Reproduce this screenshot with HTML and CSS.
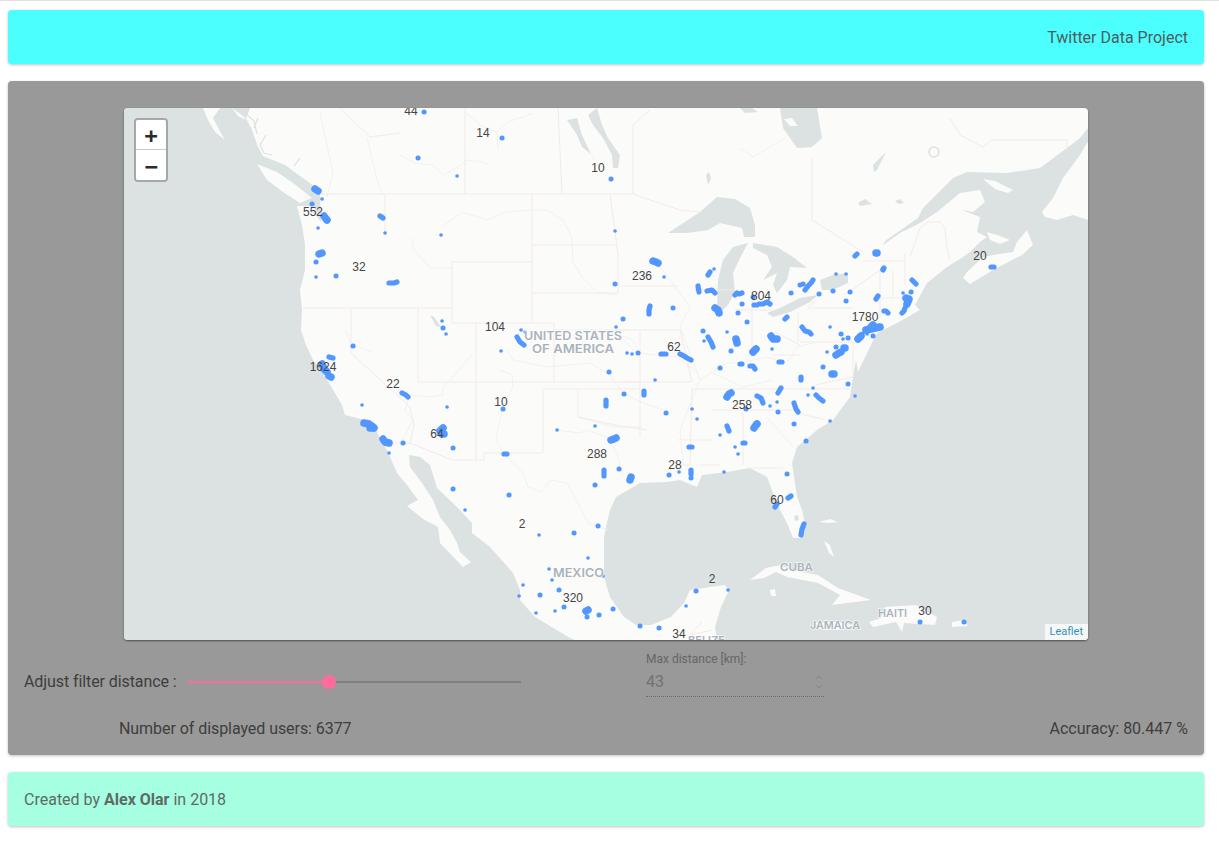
FILE: index.html
```html
<!DOCTYPE html>
<html lang="en">
<head>
<meta charset="utf-8">
<title>Twitter Data Project</title>
<link rel="stylesheet" href="styles.css">
</head>
<body>
<div class="page">
  <header class="card header">Twitter Data Project</header>
  <main class="card panel">
    <div class="map">
      <svg class="map-svg" viewBox="124 108 964 532" width="964" height="532">
        <rect class="land" x="124" y="108" width="964" height="532"/>
        <!-- oceans -->
        <path class="water" d="M124 108L250 108L246 118L252 130L258 147L263 156L285 165L300 176L314 186L320 195L321 222L316 215L314 206L297 206L302 225L305 245L305 270L300 290L302 310L301 330L306 345L313 360L322 372L332 388L342 405L345 415L365 420L375 428L381 441L387 450L397 473L407 485L418 500L407 506L423 519L438 527L440 543L463 567L471 562L460 552L457 543L450 530L440 517L433 500L422 483L410 467L409 455L420 457L430 465L437 488L457 507L472 523L472 533L490 547L513 573L520 590L520 600L535 617L570 638L575 640L124 640Z"/>
        <path class="water" d="M717 640L715 627L721 607L729 590L725 585L710 587L690 590L684 603L671 617L651 625L636 625L624 617L610 597L604 577L604 560L604 538L606 527L610 510L616 497L640 483L667 482L680 480L697 487L702 475L727 472L750 468L767 477L773 493L780 510L787 523L793 538L801 538L805 523L802 510L797 497L792 463L797 447L817 430L833 420L850 397L853 377L856 360L858 372L867 353L877 333L897 323L920 310L915 305L927 283L947 267L963 257L970 252L980 242L987 237L977 232L980 217L962 210L973 212L985 202L980 190L960 193L937 212L920 223L900 233L883 245L885 241L918 218L923 208L953 178L967 172L1007 173L1040 168L1067 148L1080 138L1088 128L1088 640Z"/>
        <!-- islands -->
        <path class="land" d="M203 108L220 108L213 118L222 135L225 140L215 132L208 120Z"/>
        <path class="land" d="M232 108L243 116L246 120L238 116Z"/>
        <path class="land" d="M257 164L277 172L293 183L312 198L300 203L283 192L267 180Z"/>
        <path class="land" d="M963 278L967 272L983 257L993 255L1013 252L1017 242L1027 230L1033 245L1022 255L993 270L970 284Z"/>
        <path class="land" d="M987 232L1000 236L1010 240L1000 244L990 240Z"/>
        <path class="land" d="M1042 212L1053 198L1063 178L1080 155L1087 143L1088 143L1088 220L1073 215L1057 220L1045 217Z"/>
        <path class="land" d="M983 179L995 181L1013 190L1008 193L995 189Z"/>
        <path class="land" d="M750 580L766 568L780 565L791 570L818 575L838 588L871 600L832 605L840 595L818 583L787 577L776 572L764 578Z"/>
        <path class="land" d="M869 622L881 618L885 607L916 605L937 617L935 625L904 623L902 632L896 622L873 627Z"/>
        <path class="land" d="M952 622L964 620L968 626L952 627Z"/>
        <path class="land" d="M824 541L830 545L834 557L829 553Z"/>
        <path class="land" d="M814 623L838 622L856 626L838 630L820 629Z"/>
        <path class="land" d="M770 590L775 589L776 596L771 596Z"/>
        <path class="land" d="M819 522L830 519L838 522L828 523Z"/>
        <path class="inlet" d="M245 113l9 8 3 13M258 118l-4 10M266 135l-6 10 4 8 8 2M300 158l-6 8"/>
        <!-- lakes -->
        <path class="water" d="M668 233L700 212L717 197L735 199L750 208L755 225L755 237L744 237L742 228L720 223L708 230L687 233Z"/>
        <path class="water" d="M717 310L718 280L723 260L733 247L748 243L740 258L733 273L735 292L728 305L720 313Z"/>
        <path class="water" d="M753 243L777 247L793 257L807 268L790 267L787 280L777 293L773 285L777 273L763 280L772 267L767 255L753 248Z"/>
        <path class="water" d="M767 313L780 308L800 298L818 295L810 302L790 312L773 317Z"/>
        <path class="water" d="M820 280L833 275L848 273L848 283L833 290L822 290Z"/>
        <path class="water" d="M588 115L597 108L602 125L608 138L620 155L618 168L613 168L612 155L603 138L593 125Z"/>
        <path class="water" d="M567 120L577 118L582 135L590 152L595 162L592 155L582 147L577 135Z"/>
        <path class="water" d="M780 108L817 108L822 138L812 147L797 148L783 128Z"/>
        <path class="land" d="M784 119L792 118L798 126L790 126Z"/>
        <path class="water" d="M740 108L752 108L758 112L745 113Z"/>
        <path class="water" d="M706 175L709 172L711 178L708 185Z"/>
        <path class="water" d="M430 315L434 317L441 327L436 326Z"/>
        <path class="water" d="M858 203L865 199L872 204L860 206Z"/>
        <path class="water" d="M873 165L886 152L877 170L874 172Z"/>
        <path class="water" d="M895 201L900 199L904 203L899 204Z"/>
        <path class="water" d="M794 516L798 515L799 520L795 521Z"/>
        <circle class="ring" cx="934" cy="152" r="5"/>
        <!-- rivers -->
        <path class="river" d="M400 155L415 163L433 165L443 175L457 168L467 160L483 162L487 165M465 112L480 125L497 132L507 122L523 117L533 113M497 132L498 150M442 227L462 212L488 220L505 212L533 210L547 210L563 220L572 238L573 262L583 278L597 292L617 295M413 238L413 248L430 268L453 268M500 370L512 375L513 387L503 407L497 433L497 443L507 457L523 473L528 487L542 492L550 480L567 483L580 507L588 523L608 530M473 353L453 377L443 387L443 395L428 397L410 395L405 410L413 420L400 445M507 350L513 360L547 367L590 363L610 375L623 393L643 403L673 413M557 430L580 433L587 430L607 437L617 453L623 477M578 417L613 427L643 427M657 263L675 287L690 307L680 327L700 380L693 397L680 430L683 463L697 480M700 380L727 363L740 363L767 357L787 363L797 347L813 343M607 330L633 340L639 353L677 357L698 373M713 373L743 387L773 380M767 417L793 447M740 148L753 157L787 137M320 113L333 173L327 197M367 137L377 180L383 195M345 330L352 345L372 352M633 350L620 335"/>
        <!-- borders -->
        <path class="border" d="M320 194H633L650 200L680 210L700 212M340 108L370 137L400 133M465 108V194M558 108L562 194M633 194V125L650 110M385 194V232M303 308H452M351 308V353L410 407L414 425L410 443M418 308V382M452 262V323M452 262H533M452 323H554M476 323V460M554 323V382M532 194V323M532 245H618M532 293H618M610 194L618 255V293M618 286H678M554 330H627M418 382H639M543 389V452M543 389H640M578 389V417L615 425L647 430M476 460H484V453H543M476 460H452L410 443H387M640 330V437M615 330H680L692 382M620 382H692M692 389H850M712 410H797M743 410V465M678 440H712M692 389L690 465H680M700 465H720M747 468H783M752 300V356M695 290H735M798 313V342M808 308H853M800 342H853M853 342V377M808 308L815 300M845 295L880 270L880 317M880 298H905M893 270V298M905 253V285M863 261H903M910 257L920 228L928 222L940 222L945 228L947 248L950 260M812 158V220L863 252M950 118L960 135L983 147L992 140H1067V150M735 310H775M775 332L800 345M773 355L800 355M853 377L815 385M798 413L825 420M690 635L712 630M690 635L702 622"/>
        <!-- points -->
        <path class="pts-s" d="M457 176h.1M441 235h.1M615 231h.1M664 277h.1M714 269h.1M616 327h.1M704 341h.1M727 332h.1M772 349h.1M836 274h.1M846 274h.1M903 293h.1M830 327h.1M843 339h.1M867 334h.1M863 333h.1M827 352h.1M855 396h.1M813 388h.1M808 395h.1M777 402h.1M770 406h.1M830 421h.1M692 409h.1M697 419h.1M655 380h.1M627 353h.1M632 354h.1M720 435h.1M735 447h.1M738 454h.1M724 472h.1M679 472h.1M362 405h.1M447 407h.1M389 453h.1M442 321h.1M446 334h.1M521 330h.1M525 332h.1M501 351h.1M557 430h.1M595 426h.1M465 510h.1M539 535h.1M588 558h.1M549 569h.1M552 580h.1M603 576h.1M523 585h.1M519 596h.1M555 611h.1M536 613h.1M686 606h.1M728 590h.1M322 199h.1M318 228h.1M316 277h.1M385 233h.1"/>
        <path class="pts-m" d="M424 112h.1M502 138h.1M418 158h.1M611 179h.1M615 284h.1M673 308h.1M623 319h.1M703 331h.1M731 351h.1M738 313h.1M747 322h.1M742 304h.1M753 297h.1M791 293h.1M800 285h.1M803 284h.1M819 294h.1M883 269h.1M833 291h.1M850 292h.1M846 301h.1M911 292h.1M720 368h.1M841 334h.1M848 338h.1M873 336h.1M836 347h.1M823 367h.1M848 384h.1M778 412h.1M794 424h.1M806 441h.1M746 409h.1M666 413h.1M624 394h.1M609 372h.1M691 478h.1M669 475h.1M619 469h.1M787 474h.1M353 346h.1M453 448h.1M403 443h.1M443 328h.1M503 409h.1M453 489h.1M509 495h.1M598 526h.1M540 595h.1M559 590h.1M564 607h.1M587 617h.1M599 615h.1M613 609h.1M640 626h.1M659 628h.1M696 591h.1M920 622h.1M964 622h.1M312 204h.1M316 262h.1M336 276h.1M574 533h.1M595 485h.1M638 353h.1"/>
        <path class="pts-b" d="M653 261l3 1 2 1M715 308l3 2 1 3M876 253h1M906 298l3 1-2 5M736 339l1 4M771 336l2 3 4 0M753 352l3-3M836 355l3-2 2-1M844 348h1M832 374h2M727 397l2-3 2-1M611 440l3-1 2-1M630 480l1-3M754 428l2-3 1-1M319 254l3-1M324 216l2 3 1 1M315 189l3 2M322 364l2 5 3 3M329 376l2 1M364 423l5 1 3 2 2 2M370 428l3 0M383 439l2 3 4 1M440 431l3-3M442 434l2 0M586 611l2-1M858 339l3-3M866 330l5-1 4-1 5-1M871 327l2-2"/>
        <path class="pts-l" d="M650 306l-1 4 0 4M698 286l1 6M707 291l5-1 3 3M708 275l2-3M735 295l2-2 2 1 3-1M759 304l4 0 4-2 3 2M754 305h3M805 290l3-4 3-3 2-3M855 256l2-2M883 270l1-2M876 299l2-3M884 311l2 0 2 2M912 280l4 4M905 308l-1 3-2 2M991 267h3M785 319l2-2M740 364h2M750 366l3 0 2 3M779 362h3M802 327l3 4 4 1 2 2M801 377v3M778 393l3-5M816 395l3 3 4 3M794 403l2 6 2 3M757 396l4 2 2 5M644 391v4M606 400v6M661 354h5M680 354l4 2 3 2 4 2M727 426l2 5M743 443h2M689 447h3M691 470v4M604 470v6M788 498l3-2M775 507l2-3M389 283l5 0 3-1M329 357l4 1M402 393l4 2 2 2M517 337l3 5 4 3M504 454h3M804 524l-2 5-1 6M380 216l3 2M708 337l3 5 2 5"/>
        <!-- country names -->
        <text class="country" x="524" y="340" textLength="98" lengthAdjust="spacingAndGlyphs">UNITED STATES</text>
        <text class="country" x="532" y="353" textLength="82" lengthAdjust="spacingAndGlyphs">OF AMERICA</text>
        <text class="country" x="553" y="577" textLength="51" lengthAdjust="spacingAndGlyphs">MEXICO</text>
        <text class="country small" x="780" y="571" textLength="33" lengthAdjust="spacingAndGlyphs">CUBA</text>
        <text class="country small" x="810" y="629" textLength="50" lengthAdjust="spacingAndGlyphs">JAMAICA</text>
        <text class="country small" x="878" y="617" textLength="29" lengthAdjust="spacingAndGlyphs">HAITI</text>
        <text class="country small" x="688" y="644" textLength="37" lengthAdjust="spacingAndGlyphs">BELIZE</text>
        <!-- counts -->
        <text class="count" x="411" y="115">44</text>
        <text class="count" x="483" y="137">14</text>
        <text class="count" x="598" y="172">10</text>
        <text class="count" x="313" y="216">552</text>
        <text class="count" x="359" y="271">32</text>
        <text class="count" x="642" y="280">236</text>
        <text class="count" x="761" y="300">804</text>
        <text class="count" x="865" y="321">1780</text>
        <text class="count" x="980" y="260">20</text>
        <text class="count" x="495" y="331">104</text>
        <text class="count" x="674" y="351">62</text>
        <text class="count" x="323" y="371">1624</text>
        <text class="count" x="393" y="388">22</text>
        <text class="count" x="501" y="406">10</text>
        <text class="count" x="742" y="409">258</text>
        <text class="count" x="437" y="438">64</text>
        <text class="count" x="597" y="458">288</text>
        <text class="count" x="675" y="469">28</text>
        <text class="count" x="777" y="504">60</text>
        <text class="count" x="522" y="528">2</text>
        <text class="count" x="712" y="583">2</text>
        <text class="count" x="573" y="602">320</text>
        <text class="count" x="925" y="615">30</text>
        <text class="count" x="679" y="638">34</text>
      </svg>
      <div class="zoom">
        <a class="zoom-btn zoom-in">+</a>
        <a class="zoom-btn zoom-out">−</a>
      </div>
      <div class="attribution">Leaflet</div>
    </div>
    <div class="controls">
      <span class="slider-label">Adjust filter distance :</span>
      <div class="slider">
        <span class="slider-fill"></span>
        <span class="slider-rest"></span>
        <span class="slider-thumb"></span>
      </div>
      <div class="distance">
        <span class="distance-label">Max distance [km]:</span>
        <div class="distance-input">
          <span>43</span>
          <svg class="spinner" viewBox="0 0 8 16" width="8" height="16"><path d="M1 5l3-3 3 3M1 11l3 3 3-3"/></svg>
        </div>
      </div>
    </div>
    <div class="stats">
      <span class="tight">Number of displayed users: 6377</span>
      <span>Accuracy: 80.447 %</span>
    </div>
  </main>
  <footer class="card footer"><span>Created by <b>Alex Olar</b> in 2018</span></footer>
</div>
</body>
</html>
```

FILE: styles.css
```css
html, body {
  margin: 0;
  padding: 0;
  background: #fff;
}
body {
  border-top: 1px solid #e2e2e2;
  font-family: Roboto, "Liberation Sans", sans-serif;
  font-size: 16px;
  line-height: 24px;
}
.page {
  display: flex;
  flex-direction: column;
  gap: 17px;
  padding: 9px 15px 32px 8px;
}
.card {
  border-radius: 4px;
  box-shadow: 0 1px 3px rgba(0, 0, 0, .25);
}
.header {
  height: 54px;
  box-sizing: border-box;
  padding: 16px 16px 14px;
  text-align: right;
  background: #4cffff;
  color: #4d5c5c;
}
.panel {
  background: #999;
  color: #3e3e3e;
  padding: 27px 0 14px;
  display: flex;
  flex-direction: column;
}
.map {
  position: relative;
  width: 964px;
  height: 532px;
  margin: 0 auto;
  border-radius: 4px;
  overflow: hidden;
  box-shadow: 0 1px 2px rgba(0, 0, 0, .5);
}
.map-svg {
  display: block;
}
.land { fill: #fbfbfa; }
.water { fill: #dce1e2; }
.inlet { fill: none; stroke: #dce1e2; stroke-width: 1.2; }
.ring { fill: none; stroke: #dce1e2; stroke-width: 1.5; }
.river { fill: none; stroke: #efefec; stroke-width: .9; stroke-linejoin: round; }
.border { fill: none; stroke: #f5e9e9; stroke-width: 1; stroke-linejoin: round; }
.pts-s, .pts-m, .pts-b, .pts-l {
  fill: none;
  stroke: #5297ff;
  stroke-linecap: round;
  stroke-linejoin: round;
}
.pts-s { stroke-width: 3.6; }
.pts-m { stroke-width: 5; }
.pts-b { stroke-width: 7.5; }
.pts-l { stroke-width: 5.2; }
.country {
  font-family: Inter, "Open Sans", sans-serif;
  font-size: 12px;
  font-weight: 600;
  fill: #a9b3bc;
  stroke: #fff;
  stroke-width: 1.5;
  stroke-opacity: .7;
  paint-order: stroke;
}
.country.small { font-size: 10.5px; }
.count {
  font-family: "Liberation Sans", Arial, sans-serif;
  font-size: 12px;
  fill: #444;
  text-anchor: middle;
}
.zoom {
  position: absolute;
  left: 10px;
  top: 10px;
  display: flex;
  flex-direction: column;
  border: 2px solid rgba(0, 0, 0, .25);
  border-radius: 4px;
  overflow: hidden;
  background-clip: padding-box;
}
.zoom-btn {
  display: block;
  width: 30px;
  height: 30px;
  background: #fff;
  color: #2b2b2b;
  font-family: "DejaVu Sans Mono", "Liberation Mono", monospace;
  font-size: 22px;
  font-weight: 700;
  line-height: 30px;
  text-align: center;
}
.zoom-in {
  border-bottom: 1px solid #ccc;
  box-sizing: border-box;
  line-height: 31px;
}
.zoom-out {
  line-height: 33px;
}
.attribution {
  position: absolute;
  right: 0;
  bottom: 0;
  padding: 0 5px;
  height: 16px;
  line-height: 16px;
  font-size: 11px;
  color: #2f93b8;
  background: rgba(255, 255, 255, .75);
}
.controls {
  display: flex;
  align-items: flex-start;
  padding: 9px 16px 0;
  height: 62px;
  box-sizing: border-box;
  margin-top: 2px;
}
.slider-label {
  margin-top: 19px;
  width: 164px;
  white-space: nowrap;
  letter-spacing: -.09px;
}
.slider {
  position: relative;
  display: flex;
  align-items: center;
  width: 333px;
  height: 14px;
  margin-top: 24px;
}
.slider-fill {
  width: 141px;
  height: 2px;
  background: #ff6b9e;
}
.slider-rest {
  flex: 1;
  height: 2px;
  background: #7f7f7f;
}
.slider-thumb {
  position: absolute;
  left: 134px;
  top: 0;
  width: 14px;
  height: 14px;
  border-radius: 50%;
  background: #ff6b9e;
}
.distance {
  display: flex;
  flex-direction: column;
  width: 178px;
  margin-left: 125px;
}
.distance-label {
  font-size: 12px;
  line-height: 16px;
  color: #666;
}
.distance-input {
  display: flex;
  align-items: center;
  justify-content: space-between;
  color: #727272;
  border-bottom: 1px dotted #6a6a6a;
  box-sizing: border-box;
  height: 30px;
}
.spinner {
  fill: none;
  stroke: #858585;
  stroke-width: 1;
  margin-right: 1px;
}
.stats {
  display: flex;
  justify-content: space-between;
  padding: 13px 16px 0 111px;
}
.tight {
  letter-spacing: -.06px;
}
.footer {
  height: 54px;
  box-sizing: border-box;
  padding: 16px 16px 14px;
  background: #a6ffe0;
  color: #5d6a65;
}
.footer b {
  font-weight: 700;
}
```
